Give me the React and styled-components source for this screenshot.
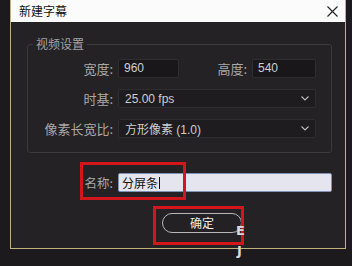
import React from "react";
import styled, { createGlobalStyle } from "styled-components";

const Global = createGlobalStyle`
  html, body { margin: 0; padding: 0; background: #1c1a1c; }
  body { width: 352px; height: 266px; overflow: hidden; font-family: "Noto Sans CJK SC", "Noto Sans", sans-serif; }
  * { box-sizing: border-box; }
`;

const Page = styled.div`
  width: 352px;
  height: 266px;
  background: #1c1a1c;
  padding-left: 10px;
`;

const Dialog = styled.div`
  width: 336px;
  border-left: 1px solid #bfb27c;
  border-right: 1px solid #bfb27c;
  border-bottom: 1px solid #bfb27c;
  background: #242225;
  display: flex;
  flex-direction: column;
`;

const TitleBar = styled.div`
  height: 22px;
  background: #fbfbfb;
  display: flex;
  align-items: center;
  justify-content: space-between;
  padding: 0 7px 0 8px;
`;

const Title = styled.span`
  font-size: 12px;
  line-height: 14px;
  color: #111;
`;

const Body = styled.div`
  position: relative;
  display: flex;
  flex-direction: column;
  padding: 0 13px 15px 0;
`;

const Group = styled.fieldset`
  margin: 15px 0 0 16px;
  padding: 8px 15px 14px 0;
  border: 1px solid #3b393c;
  border-radius: 3px;
  min-width: 0;
`;

const Legend = styled.legend`
  margin-left: 5px;
  padding: 0 3px;
  font-size: 12px;
  line-height: 14px;
  color: #a3a1a4;
`;

const FieldGrid = styled.div`
  display: grid;
  grid-template-columns: 85px 1fr;
  column-gap: 5px;
  row-gap: 11px;
  align-items: center;
`;

const Label = styled.span`
  text-align: right;
  font-size: 13px;
  line-height: 19px;
  color: #a9a7aa;
  white-space: nowrap;
`;

const SizeRow = styled.div`
  display: flex;
  align-items: center;
  gap: 5px;
`;

const SubLabel = styled(Label)`
  margin-left: auto;
`;

const TextBox = styled.div`
  width: ${(p) => p.$w}px;
  height: 19px;
  background: #19171a;
  border: 1px solid #2f2d30;
  border-radius: 2px;
  padding-left: 5px;
  font-family: "Liberation Sans", "Noto Sans CJK SC", sans-serif;
  font-size: 12px;
  line-height: 17px;
  color: #cfcdd0;
`;

const Select = styled.div`
  height: 19px;
  background: #1e1c1f;
  border: 1px solid #2f2d30;
  border-radius: 2px;
  padding: 0 6px 0 6px;
  display: flex;
  align-items: center;
  justify-content: space-between;
  font-family: "Liberation Sans", "Noto Sans CJK SC", sans-serif;
  font-size: 12px;
  color: #cfcdd0;
`;

const NameRow = styled.div`
  margin-top: 20px;
  display: grid;
  grid-template-columns: 102px 1fr;
  column-gap: 5px;
  align-items: center;
`;

const NameLabel = styled(Label)`
  font-size: 12.5px;
`;

const NameInput = styled.div`
  height: 19px;
  background: #e4e5ee;
  border: 1px solid #7d93b8;
  border-radius: 2px;
  padding-left: 3px;
  display: flex;
  align-items: center;
  font-size: 12px;
  color: #111;
`;

const Caret = styled.span`
  display: inline-block;
  width: 1px;
  height: 12px;
  background: #111;
  margin-left: 1px;
`;

const ButtonRow = styled.div`
  margin-top: 21px;
  padding-left: 151px;
  display: flex;
`;

const OkButton = styled.button`
  width: 80px;
  height: 20px;
  border: 1px solid #b9b7ba;
  border-radius: 10px;
  background: #232124;
  color: #eeeeee;
  font-family: "Noto Sans CJK SC", sans-serif;
  font-size: 12px;
  line-height: 16px;
  padding: 0;
`;

const Highlight = styled.div`
  position: absolute;
  left: ${(p) => p.$x}px;
  top: ${(p) => p.$y}px;
  width: ${(p) => p.$w}px;
  height: ${(p) => p.$h}px;
  border: 3px solid #d3161c;
  pointer-events: none;
`;

const Mark = styled.span`
  position: absolute;
  left: ${(p) => p.$x}px;
  top: ${(p) => p.$y}px;
  font-family: "DejaVu Sans", sans-serif;
  font-weight: bold;
  font-size: 13px;
  line-height: 13px;
  color: #d9d7da;
`;

const Chevron = () => (
  <svg width="8" height="5" viewBox="0 0 8 5">
    <polyline points="0.5,0.5 4,4 7.5,0.5" fill="none" stroke="#bdbbbe" strokeWidth="1.1" />
  </svg>
);

const CloseIcon = () => (
  <svg width="11" height="11" viewBox="0 0 11 11">
    <path d="M0.5 0.5 L10.5 10.5 M10.5 0.5 L0.5 10.5" stroke="#222" strokeWidth="1.1" />
  </svg>
);

export default function App() {
  return (
    <>
      <Global />
      <Page>
        <Dialog>
          <TitleBar>
            <Title>新建字幕</Title>
            <CloseIcon />
          </TitleBar>
          <Body>
            <Group>
              <Legend>视频设置</Legend>
              <FieldGrid>
                <Label>宽度:</Label>
                <SizeRow>
                  <TextBox $w={61}>960</TextBox>
                  <SubLabel>高度:</SubLabel>
                  <TextBox $w={64}>540</TextBox>
                </SizeRow>
                <Label>时基:</Label>
                <Select>
                  <span>25.00 fps</span>
                  <Chevron />
                </Select>
                <Label>像素长宽比:</Label>
                <Select>
                  <span>方形像素 (1.0)</span>
                  <Chevron />
                </Select>
              </FieldGrid>
            </Group>
            <NameRow>
              <NameLabel>名称:</NameLabel>
              <NameInput>
                分屏条
                <Caret />
              </NameInput>
            </NameRow>
            <ButtonRow>
              <OkButton>确定</OkButton>
            </ButtonRow>
            <Highlight $x={69} $y={140} $w={106} $h={38} />
            <Highlight $x={142} $y={184} $w={91} $h={39} />
            <Mark $x={225} $y={202}>E</Mark>
            <Mark $x={226} $y={222}>J</Mark>
          </Body>
        </Dialog>
      </Page>
    </>
  );
}
